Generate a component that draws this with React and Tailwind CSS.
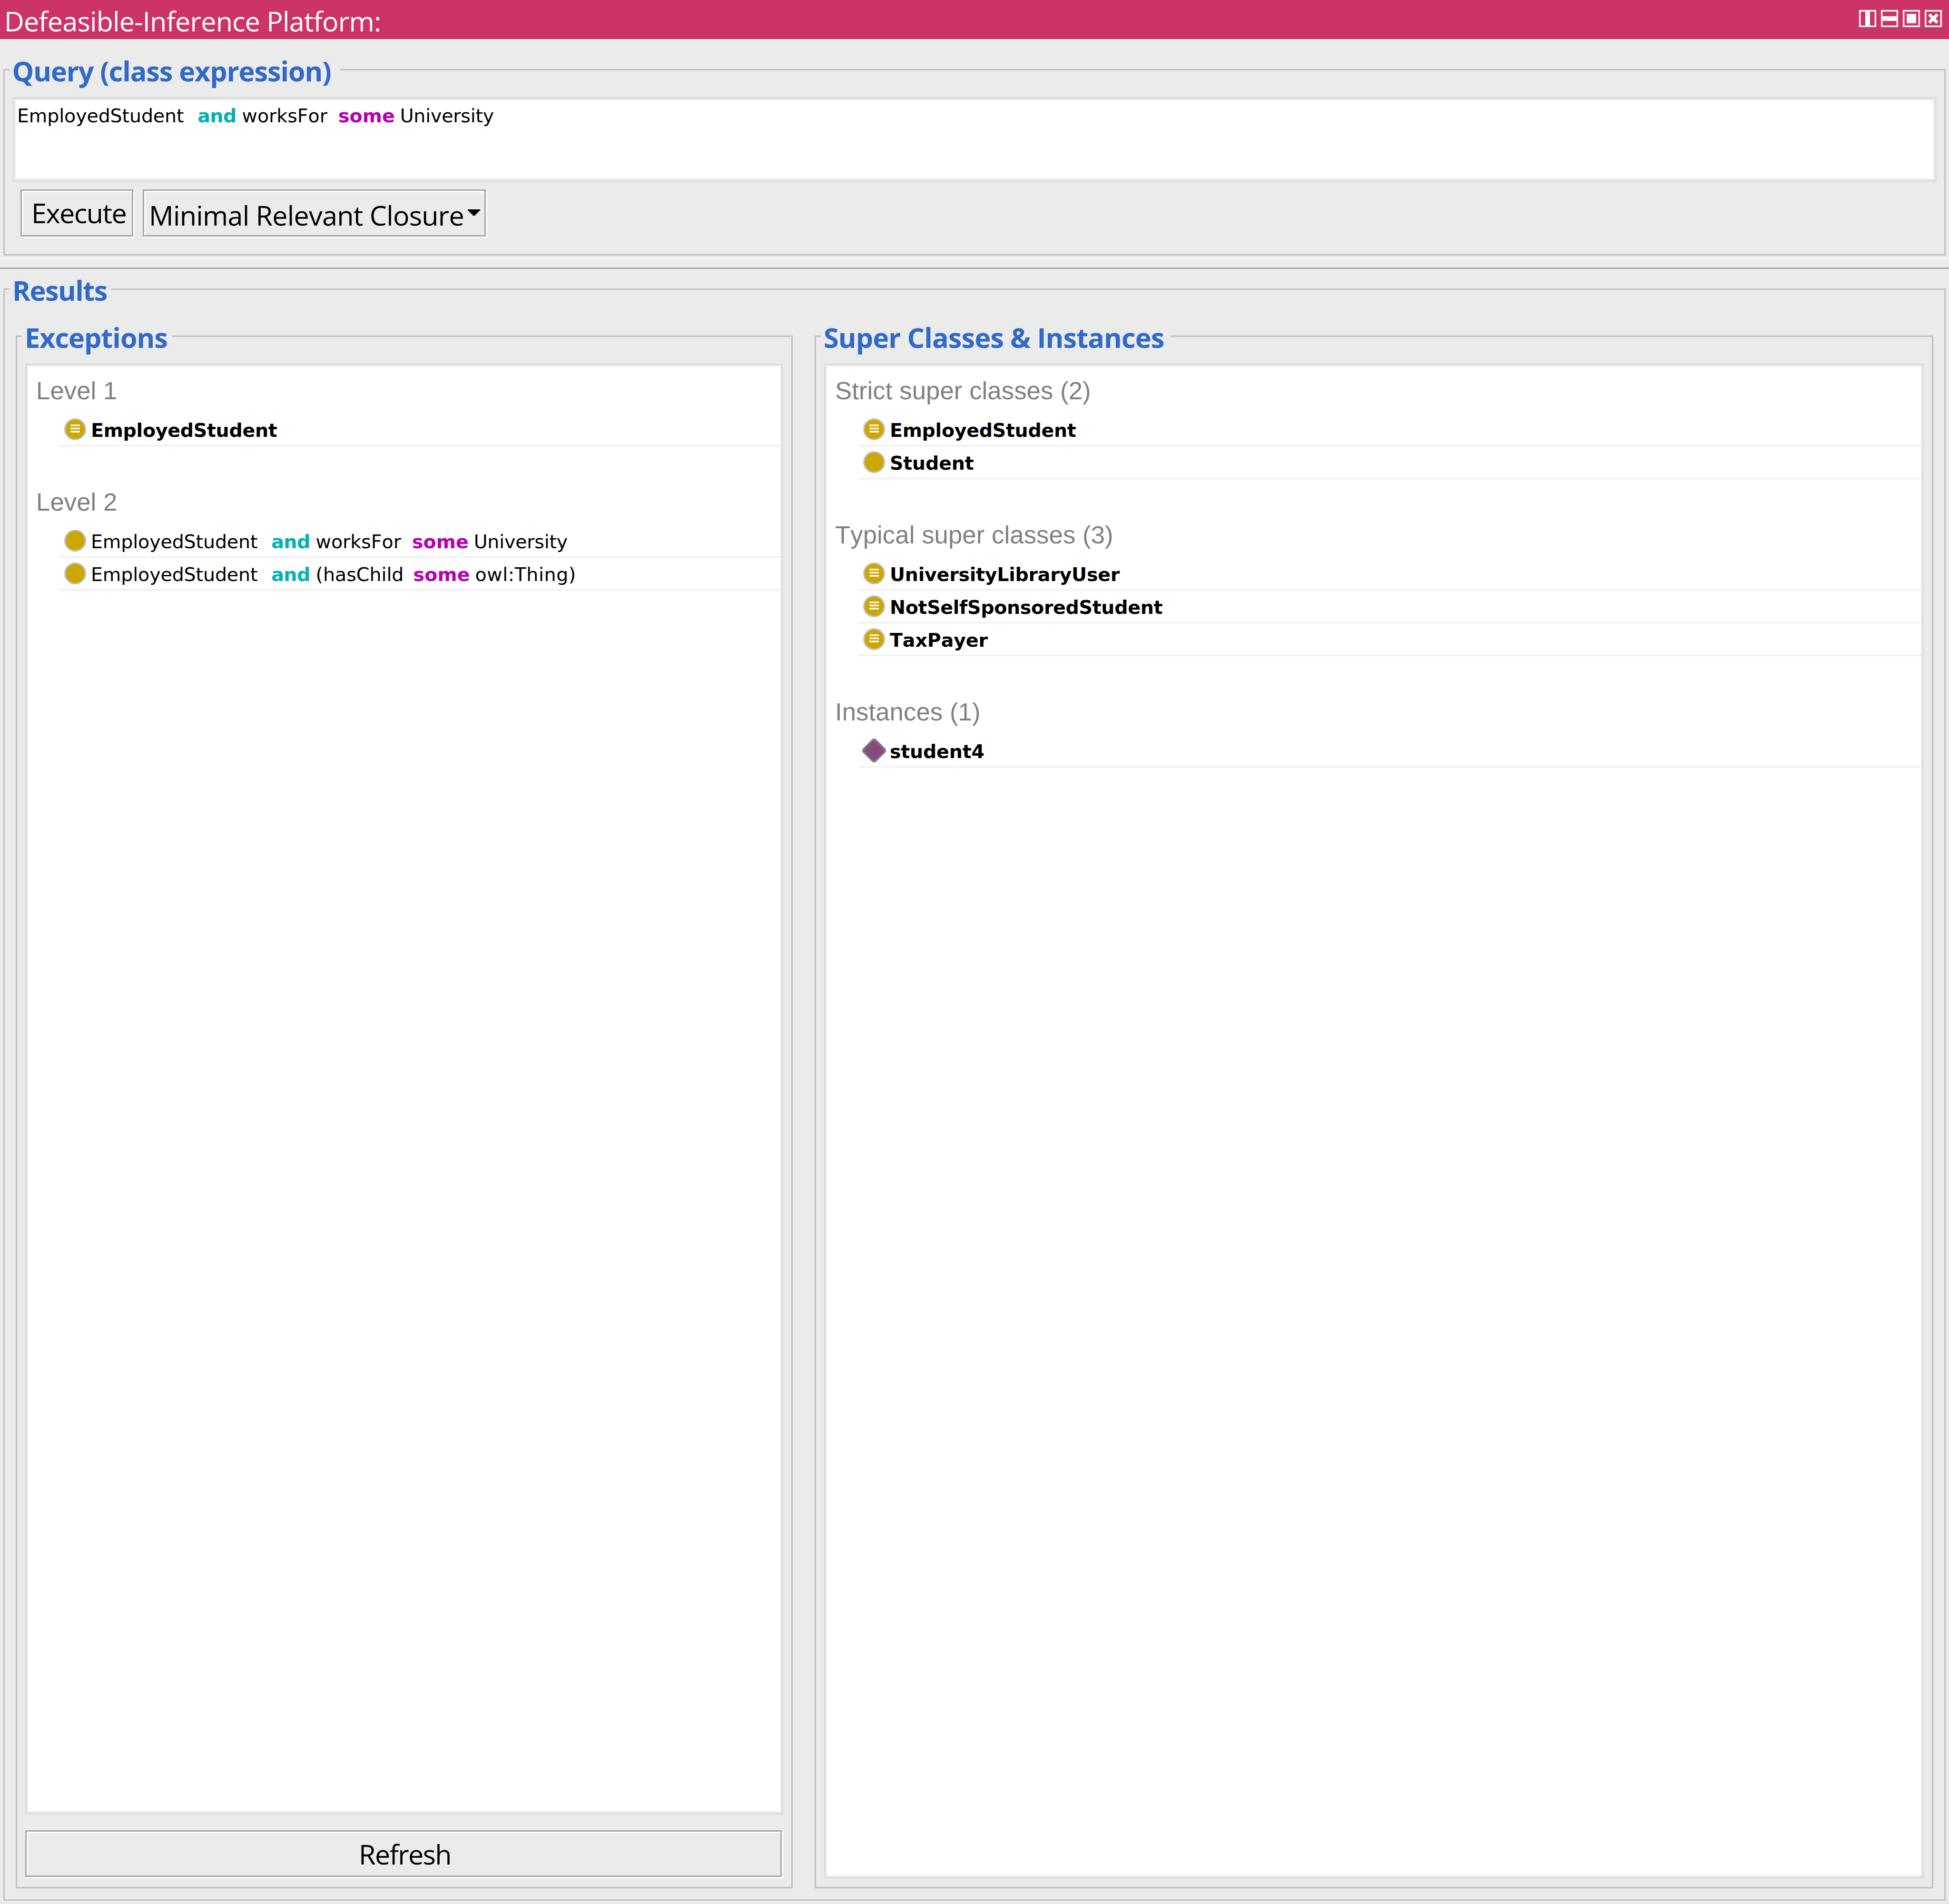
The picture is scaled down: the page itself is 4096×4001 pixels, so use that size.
import React from "react";

const verdana = "font-['DejaVu_Sans',sans-serif] text-[39.5px] leading-[46px] [font-kerning:none] whitespace-pre";
const segoe = "font-['Open_Sans',sans-serif] text-[57.5px] leading-[80px] whitespace-pre";

/* ---------- icons ---------- */

function WindowIcon({ children }) {
  return (
    <svg viewBox="0 0 44 44" className="h-[36px] w-[36px]" fill="#fff">
      <path fillRule="evenodd" d="M0 0H44V44H0ZM4 4V40H40V4Z" />
      {children}
    </svg>
  );
}

function ClassIcon({ defined }) {
  return (
    <svg viewBox="0 0 56 56" className="h-[46.1px] w-[46.1px]">
      <circle cx="28" cy="28" r="26" fill="#cea600" stroke="#c0c0c0" strokeWidth="4" />
      {defined && <path d="M16 16H40V20H16ZM16 24H40V28H16ZM16 32H40V36H16Z" fill="#fff" />}
    </svg>
  );
}

function IndividualIcon() {
  return (
    <svg viewBox="0 0 56 56" className="h-[46.1px] w-[46.1px] overflow-visible">
      <g transform="rotate(45 28 28)">
        <rect x="4" y="4" width="48" height="48" rx="8" fill="#808080" />
        <rect x="8" y="8" width="40" height="40" rx="8" fill="#874b7f" />
      </g>
    </svg>
  );
}

/* ---------- building blocks ---------- */

function Group({ title, legendClass, className, children }) {
  return (
    <section className={"flex flex-col border-[3px] border-[#c0c0c0] " + className}>
      <h2 className={segoe + " ml-[10px] mt-[-39px] h-[80px] shrink-0 bg-[#ebebeb] font-bold text-[#3069c6] " + legendClass}>
        {title}
      </h2>
      {children}
    </section>
  );
}

function Keyword({ kind, className }) {
  return (
    <span className={"font-bold " + (kind === "and" ? "text-[#00b2b2] tracking-[-0.5px] " : "text-[#b200b2] tracking-[0.1px] ") + className}>
      {kind}
    </span>
  );
}

function WorksForExpression() {
  return (
    <div className={verdana + " flex"}>
      <span className="w-[379.2px] tracking-[-0.1px]">EmployedStudent</span>
      <Keyword kind="and" className="w-[93.4px]" />
      <span className="w-[202.4px]">worksFor</span>
      <Keyword kind="some" className="w-[129.7px]" />
      <span className="tracking-[-0.2px]">University</span>
    </div>
  );
}

function HasChildExpression() {
  return (
    <div className={verdana + " flex"}>
      <span className="w-[379.2px] tracking-[-0.1px]">EmployedStudent</span>
      <Keyword kind="and" className="w-[93.4px]" />
      <span className="w-[205px]">(hasChild</span>
      <Keyword kind="some" className="w-[129.9px]" />
      <span className="tracking-[0.6px]">owl:Thing)</span>
    </div>
  );
}

function ListBox({ className, children }) {
  return (
    <div className={"mx-[17px] flex border-[3px] border-[#dcdcdc] px-[3px] pb-[4px] pt-[3px] " + className}>
      <div className="flex grow flex-col gap-[65.85px] bg-white">{children}</div>
    </div>
  );
}

function Section({ title, children }) {
  return (
    <div>
      <h3 className="h-[98.78px] whitespace-pre pl-[17px] pt-[21px] font-['Liberation_Sans',sans-serif] text-[52.7px] leading-[59px] tracking-[0.08px] text-[#808080] [font-kerning:none]">
        {title}
      </h3>
      {children}
    </div>
  );
}

function Row({ icon, children }) {
  return (
    <div className="ml-[66px] flex h-[69.15px] items-start border-b-[3px] border-[#efefef]">
      <div className="ml-[10px] mt-[10px] w-[56px] shrink-0">{icon}</div>
      <div className="mt-[12.4px]">{children}</div>
    </div>
  );
}

function Name({ className, children }) {
  return <span className={verdana + " block font-bold " + className}>{children}</span>;
}

const bevel =
  "border-[3px] border-[#a7a7a7] bg-[#ebebeb] text-black shadow-[3px_3px_0_#fff,inset_3px_3px_0_#fff]";

/* ---------- page ---------- */

export default function App() {
  return (
    <div className="flex h-[4001px] w-[4096px] flex-col overflow-hidden bg-[#ebebeb] text-black">
      <header className="flex h-[82px] shrink-0 items-start justify-between bg-[#cc3366] pl-[9px] pr-[15px]">
        <h1 className="whitespace-pre font-['Open_Sans',sans-serif] text-[57.5px] leading-[88px] tracking-[-0.83px] text-white">
          Defeasible-Inference Platform:
        </h1>
        <div className="mt-[21px] flex gap-[10px]">
          <WindowIcon><path d="M16 4H28V40H16Z" /></WindowIcon>
          <WindowIcon><path d="M4 16H40V28H4Z" /></WindowIcon>
          <WindowIcon><path d="M10 10H34V34H10Z" /></WindowIcon>
          <WindowIcon>
            <path d="M11.5 11.5L32.5 32.5M32.5 11.5L11.5 32.5" stroke="#fff" strokeWidth="8" />
          </WindowIcon>
        </div>
      </header>

      <Group
        title="Query (class expression)"
        legendClass="w-[695px] pl-[5.5px] tracking-[-1.08px]"
        className="ml-[7px] mr-[7px] mt-[63px] h-[392px] shrink-0"
      >
        <div className="ml-[16px] mr-[16px] mt-[15px] flex h-[178px] border-[3px] border-[#dcdcdc] p-1">
          <div className="grow bg-white pl-[3px] pt-[9px]">
            <WorksForExpression />
          </div>
        </div>
        <div className="ml-[33px] mt-[16px] flex h-[99px] gap-[20px]">
          <button className={bevel + " flex w-[237px] items-start pl-[20px] pt-[6px] text-left"}>
            <span className={segoe + " block tracking-[-1.53px]"}>Execute</span>
          </button>
          <button className={bevel + " flex w-[721px] items-start pl-[10px] text-left"}>
            <span className={segoe + " mt-[11px] w-[661px] shrink-0 tracking-[-0.76px]"}>Minimal Relevant Closure</span>
            <svg viewBox="0 0 32 16" className="ml-[9px] mt-[39px] h-[13px] w-[26px] shrink-0">
              <path d="M0 0H32V4H28V8H24V12H20V16H12V12H8V8H4V4H0Z" />
            </svg>
          </button>
        </div>
      </Group>

      <div className="mt-[6px] h-[2px] shrink-0 bg-white" />
      <div className="mt-[17px] h-[3px] shrink-0 bg-[#a7a7a7]" />

      <Group
        title="Results"
        legendClass="w-[214px] pl-[6px] tracking-[-1.5px]"
        className="mx-[7px] mb-[7px] mt-[41px] grow"
      >
        <div className="ml-[23px] mr-[23px] mt-[55px] mb-[23px] flex grow gap-[46px]">
          <Group
            title="Exceptions"
            legendClass="w-[316px] pl-[6px] tracking-[-1px]"
            className="w-[1633px] shrink-0"
          >
            <ListBox className="mt-[15px] h-[3049px]">
              <Section title="Level 1">
                <Row icon={<ClassIcon defined />}><Name className="tracking-[-0.27px]">EmployedStudent</Name></Row>
              </Section>
              <Section title="Level 2">
                <Row icon={<ClassIcon />}><WorksForExpression /></Row>
                <Row icon={<ClassIcon />}><HasChildExpression /></Row>
              </Section>
            </ListBox>
            <button className={bevel + " ml-[17px] mr-[20px] mt-[33px] flex h-[98px] items-start justify-center pl-[6px] pt-[7px]"}>
              <span className={segoe + " tracking-[-1.68px]"}>Refresh</span>
            </button>
          </Group>

          <Group
            title="Super Classes &amp; Instances"
            legendClass="w-[735px] pl-[6px] tracking-[-0.88px]"
            className="grow"
          >
            <ListBox className="mb-[17px] mt-[15px] grow">
              <Section title="Strict super classes (2)">
                <Row icon={<ClassIcon defined />}><Name className="tracking-[-0.27px]">EmployedStudent</Name></Row>
                <Row icon={<ClassIcon />}><Name className="tracking-[-0.13px]">Student</Name></Row>
              </Section>
              <Section title="Typical super classes (3)">
                <Row icon={<ClassIcon defined />}><Name className="tracking-[-0.22px]">UniversityLibraryUser</Name></Row>
                <Row icon={<ClassIcon defined />}><Name className="tracking-[-0.29px]">NotSelfSponsoredStudent</Name></Row>
                <Row icon={<ClassIcon defined />}><Name className="tracking-[-0.1px]">TaxPayer</Name></Row>
              </Section>
              <Section title="Instances (1)">
                <Row icon={<IndividualIcon />}><Name className="tracking-[-0.17px]">student4</Name></Row>
              </Section>
            </ListBox>
          </Group>
        </div>
      </Group>
    </div>
  );
}
